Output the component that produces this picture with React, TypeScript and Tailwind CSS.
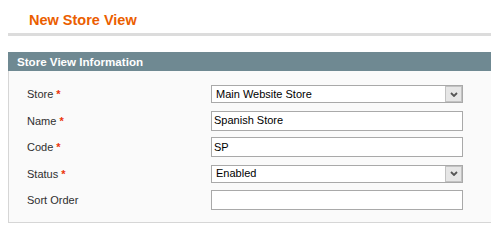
const fields = [
  { label: "Store", required: true, type: "select", value: "Main Website Store" },
  { label: "Name", required: true, type: "input", value: "Spanish Store" },
  { label: "Code", required: true, type: "input", value: "SP" },
  { label: "Status", required: true, type: "select", value: "Enabled" },
  { label: "Sort Order", required: false, type: "input", value: "" },
];

function SelectBox({ value }: { value: string }) {
  return (
    <div className="flex items-center justify-between w-[252px] h-[18px] border border-[#a9a9a9] bg-white">
      <span className="pl-[4px] text-[11px] text-black leading-none">{value}</span>
      <div className="flex items-center justify-center w-[17px] h-[16px] border border-[#c2c2c2] bg-[#e6e6e6]">
        <svg width="8" height="5" viewBox="0 0 8 5">
          <path d="M1 1 L4 4 L7 1" fill="none" stroke="#555" strokeWidth="1.8" />
        </svg>
      </div>
    </div>
  );
}

function TextBox({ value }: { value: string }) {
  return (
    <div className="flex items-center w-[252px] h-[20px] border border-[#a9a9a9] bg-white">
      <span className="pl-[2px] text-[11px] text-black leading-none">{value}</span>
    </div>
  );
}

export default function App() {
  return (
    <div className="w-[491px] h-[241px] bg-white overflow-hidden font-['Liberation_Sans',Arial,sans-serif]">
      <div className="pl-[8px]">
        <div className="h-[33px] pl-[21px] pt-[12px]">
          <h1 className="text-[14.5px] font-bold text-[#eb5e00] leading-[16px]">New Store View</h1>
        </div>
        <div className="h-[3px] bg-[#dcdcdc]" />
        <div className="mt-[16px] w-[490px]">
          <div className="flex items-center h-[19px] bg-[#6f8992] pl-[9px]">
            <span className="text-[11.6px] font-bold text-white">Store View Information</span>
          </div>
          <div className="bg-[#fafafa] border-l border-b border-[#d6d6d6] pl-[18px] pt-[10px] pb-[8.5px]">
            {fields.map((f) => (
              <div key={f.label} className="flex items-center h-[26.5px]">
                <div className="w-[184px] text-[11px] text-[#2f2f2f]">
                  {f.label}
                  {f.required && <span className="text-[#eb340a] font-bold"> *</span>}
                </div>
                {f.type === "select" ? <SelectBox value={f.value} /> : <TextBox value={f.value} />}
              </div>
            ))}
          </div>
        </div>
      </div>
    </div>
  );
}
